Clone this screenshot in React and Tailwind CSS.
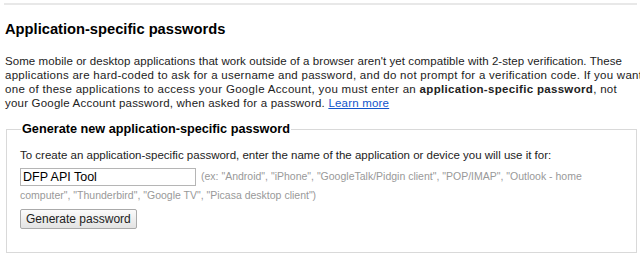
import React from "react";

export default function App() {
  return (
    <div className="w-full overflow-hidden bg-white">
      <div className="w-[645px] pl-[5px] font-['Liberation_Sans',Arial,sans-serif] text-[#222]">
        <div className="mt-[3px] ml-[-1px] h-[2px] w-[633px] bg-[#e8e8e8]" />
        <h2 className="mt-[15px] text-[14.7px] font-bold leading-[19px] text-black">
          Application-specific passwords
        </h2>
        <p className="mt-[15px] text-[11.5px] leading-[14px] whitespace-nowrap">
          <span className="tracking-[0.07px]">
            Some mobile or desktop applications that work outside of a browser
            aren't yet compatible with 2-step verification. These
          </span>
          <br />
          <span className="tracking-[0.27px]">
            applications are hard-coded to ask for a username and password, and
            do not prompt for a verification code. If you want to use
          </span>
          <br />
          <span className="tracking-[0.32px]">
            one of these applications to access your Google Account, you must
            enter an <b>application-specific password</b>, not
          </span>
          <br />
          <span className="tracking-[0.2px]">
            your Google Account password, when asked for a password.{" "}
            <a href="#" className="text-[#1155cc] underline">
              Learn more
            </a>
          </span>
        </p>
        <fieldset className="mt-[12px] ml-[1px] w-[631px] border border-[#d9d9d9] pr-[14px] pb-[22px] pl-[13px]">
          <legend className="ml-[1px] px-[1px] text-[12.7px] leading-[15px] font-bold text-black">
            Generate new application-specific password
          </legend>
          <div className="mt-[11px] text-[11.5px] leading-[15px]">
            To create an application-specific password, enter the name of the
            application or device you will use it for:
          </div>
          <div className="mt-[4px] text-[10.5px] leading-[18px] text-[#999] whitespace-nowrap">
            <input
              type="text"
              defaultValue="DFP API Tool"
              className="mr-[5px] inline-block h-[18px] w-[176px] border border-[#b5b5b5] px-[2px] align-middle text-[12.5px] text-black outline-none"
            />
            (ex: "Android", "iPhone", "GoogleTalk/Pidgin client", "POP/IMAP",
            "Outlook - home
            <br />
            computer", "Thunderbird", "Google TV", "Picasa desktop client")
          </div>
          <button className="mt-[5px] h-[20px] rounded-[2px] border border-[#aaa] bg-gradient-to-b from-[#fbfbfb] to-[#e3e3e3] px-[5px] text-[12px] leading-[18px] text-[#222]">
            Generate password
          </button>
        </fieldset>
      </div>
    </div>
  );
}
